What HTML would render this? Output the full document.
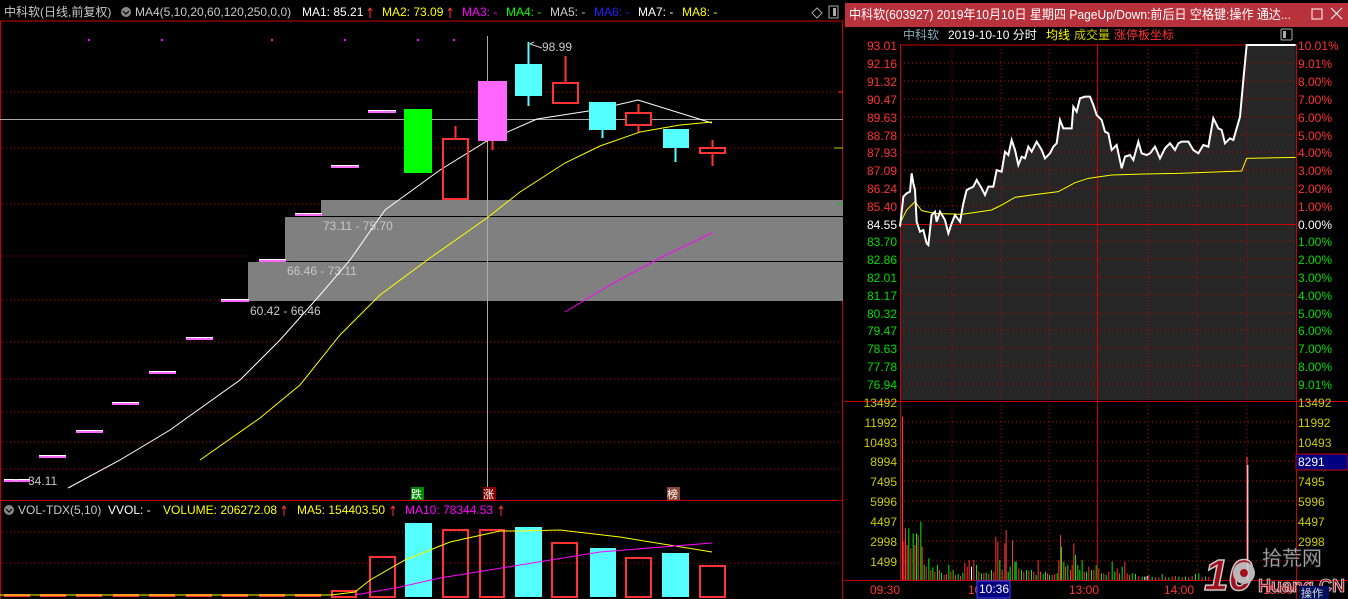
<!DOCTYPE html>
<html><head><meta charset="utf-8"><style>
html,body{margin:0;padding:0;background:#000;width:1348px;height:599px;overflow:hidden}
svg{display:block}
text{font-family:"Liberation Sans","Noto Sans CJK SC",sans-serif}
</style></head><body>
<svg width="1348" height="599" viewBox="0 0 1348 599" xmlns="http://www.w3.org/2000/svg">
<rect width="1348" height="599" fill="#000"/>
<!-- LEFT PANEL -->
<g font-size="12">
<text x="4" y="16" fill="#c8c8c8">中科软(日线,前复权)</text>
<circle cx="126" cy="12" r="5" fill="#888"/>
<path d="M123 11l3 3 3-3" stroke="#000" fill="none" stroke-width="1.2"/>
<text x="135" y="16" fill="#c8c8c8">MA4(5,10,20,60,120,250,0,0)</text>
<text x="302" y="16" fill="#fff">MA1: 85.21</text><path d="M370 18v-10M368 11l2-3 2 3" stroke="#f33" fill="none"/>
<text x="382" y="16" fill="#ff0">MA2: 73.09</text><path d="M450 18v-10M448 11l2-3 2 3" stroke="#f33" fill="none"/>
<text x="462" y="16" fill="#f0f">MA3: -</text>
<text x="506" y="16" fill="#0f0">MA4: -</text>
<text x="550" y="16" fill="#ccc">MA5: -</text>
<text x="594" y="16" fill="#22f">MA6: -</text>
<text x="638" y="16" fill="#fff">MA7: -</text>
<text x="682" y="16" fill="#ff0">MA8: -</text>
</g>
<path d="M817 8l5 5-5 5-5-5z" stroke="#aaa" fill="none"/>
<rect x="829" y="6" width="9" height="12" stroke="#aaa" fill="none"/><rect x="833" y="8" width="3" height="8" fill="#aaa"/>
<path d="M0 21H843M0.5 21V599M842.5 21V599M0 500.5H843" stroke="#c00" stroke-width="1"/>
<g stroke="#c00" stroke-dasharray="1 3">
<path d="M2 92H843M2 148H843M2 204H321M2 256H248M2 300H248M2 342H843M2 379H843M2 412H843M2 442H843M2 469H843"/>
<path d="M2 532H843M2 563H843"/>
</g>
<g fill="#f0f"><rect x="88" y="39" width="2" height="2"/><rect x="161" y="39" width="2" height="2"/><rect x="271" y="39" width="2" height="2"/><rect x="344" y="39" width="2" height="2"/><rect x="417" y="39" width="2" height="2"/><rect x="453" y="39" width="2" height="2"/></g>
<rect x="321" y="200" width="522" height="17" fill="#808080"/>
<rect x="285" y="217" width="558" height="45" fill="#808080"/>
<rect x="248" y="262" width="595" height="39" fill="#808080"/>
<path d="M285 216.5H843M248 261.5H843" stroke="#000"/>
<g font-size="12" fill="#c8c8c8"><text x="323" y="230">73.11 - 75.70</text><text x="287" y="275">66.46 - 73.11</text><text x="250" y="315">60.42 - 66.46</text></g>
<path d="M0 119.5H843M487.5 36V500" stroke="#aaa"/>
<g stroke="#f6f" stroke-width="2">
<path d="M368 112h28M331 167h28M295 215h27M259 261h27M221 301h28M186 339h27M149 373h27M112 404h27M76 432h27M39 457h27M4 481h26"/>
</g>
<g stroke="#fff" stroke-width="1"><path d="M368 110.5h28M331 165.5h28M295 213.5h27M259 259.5h27M221 299.5h28M186 337.5h27M149 371.5h27M112 402.5h27M76 430.5h27M39 455.5h27M4 479.5h26"/></g>
<text x="28" y="485" font-size="12" fill="#c8c8c8">34.11</text>
<path d="M18 480h-4" stroke="#ccc"/>
<polyline points="68,488 120,460 170,430 240,380 280,340 320,295 350,260 385,210 440,170 487,141 537,119 595,110 638,100 712,123" fill="none" stroke="#fff" stroke-width="1"/>
<polyline points="200,460 260,418 300,385 340,335 380,295 430,258 487,218 520,192 565,163 600,146 640,132 680,125 712,122" fill="none" stroke="#ff0" stroke-width="1"/>
<polyline points="565,312 610,285 660,258 712,233" fill="none" stroke="#f0f" stroke-width="1"/>
<rect x="404" y="109" width="28" height="64" fill="#0f0"/>
<path d="M455.5 126v12" stroke="#f33" stroke-width="2"/><rect x="443" y="139" width="25" height="60" fill="none" stroke="#f33" stroke-width="2"/>
<path d="M492.5 141v9" stroke="#f33" stroke-width="2"/><rect x="478" y="81" width="29" height="60" fill="#f6f"/>
<path d="M528.5 42v64" stroke="#5ff" stroke-width="2"/><rect x="515" y="64" width="27" height="32" fill="#5ff"/>
<path d="M534 42l-4 2M530 44l12 4" stroke="#ccc"/><text x="542" y="51" font-size="12" fill="#c8c8c8">98.99</text>
<path d="M565.5 56v26" stroke="#f33" stroke-width="2"/><rect x="553" y="83" width="25" height="20" fill="none" stroke="#f33" stroke-width="2"/>
<path d="M602.5 128v10" stroke="#5ff" stroke-width="2"/><rect x="589" y="102" width="27" height="28" fill="#5ff"/>
<path d="M638.5 104v28" stroke="#f33" stroke-width="2"/><rect x="626" y="113" width="25" height="12" fill="#000" stroke="#f33" stroke-width="2"/>
<path d="M675.5 147v15" stroke="#5ff" stroke-width="2"/><rect x="663" y="129" width="26" height="19" fill="#5ff"/>
<path d="M712.5 140v26" stroke="#f33" stroke-width="2"/><rect x="700" y="148" width="25" height="5" fill="#000" stroke="#f33" stroke-width="2"/>
<path d="M838 92h5" stroke="#f33"/><path d="M834 148h9" stroke="#cc0"/><path d="M838 204h5" stroke="#0c0"/>
<rect x="411" y="487" width="13" height="13" fill="#080"/><text x="411" y="498" font-size="11" fill="#fff">跌</text>
<rect x="483" y="487" width="13" height="13" fill="#800"/><text x="483" y="498" font-size="11" fill="#fff">涨</text>
<rect x="667" y="487" width="13" height="13" fill="#843"/><text x="667" y="498" font-size="11" fill="#fff">榜</text>
<g font-size="12">
<circle cx="9" cy="510" r="5" fill="#888"/><path d="M6 509l3 3 3-3" stroke="#000" fill="none" stroke-width="1.2"/>
<text x="18" y="514" fill="#c8c8c8">VOL-TDX(5,10)</text><text x="108" y="514" fill="#fff">VVOL: -</text>
<text x="163" y="514" fill="#ff0">VOLUME: 206272.08</text><path d="M284 516v-10M282 509l2-3 2 3" stroke="#f33" fill="none"/>
<text x="297" y="514" fill="#ff0">MA5: 154403.50</text><path d="M393 516v-10M391 509l2-3 2 3" stroke="#f33" fill="none"/>
<text x="405" y="514" fill="#f0f">MA10: 78344.53</text><path d="M501 516v-10M499 509l2-3 2 3" stroke="#f33" fill="none"/>
</g>
<g fill="#f33"><rect x="4" y="594" width="26" height="3"/><rect x="40" y="594" width="26" height="3"/><rect x="76" y="594" width="26" height="3"/><rect x="113" y="594" width="26" height="3"/><rect x="149" y="594" width="26" height="3"/><rect x="186" y="594" width="26" height="3"/><rect x="222" y="594" width="26" height="3"/><rect x="259" y="594" width="26" height="3"/><rect x="295" y="594" width="26" height="3"/></g>
<g fill="none" stroke="#f33" stroke-width="2">
<rect x="332" y="591" width="24" height="6"/><rect x="370" y="557" width="25" height="40"/><rect x="443" y="530" width="25" height="67"/><rect x="480" y="530" width="24" height="67"/><rect x="552" y="543" width="25" height="54"/><rect x="626" y="558" width="25" height="39"/><rect x="700" y="566" width="25" height="31"/>
</g>
<g fill="#5ff"><rect x="405" y="523" width="27" height="74"/><rect x="515" y="527" width="27" height="70"/><rect x="590" y="548" width="26" height="49"/><rect x="662" y="553" width="27" height="44"/></g>
<polyline points="0,595 331,595 355,592 370,580 405,560 450,542 500,531 520,531 560,530 620,537 712,552" fill="none" stroke="#ff0"/>
<polyline points="355,595 400,587 440,578 520,565 600,552 712,543" fill="none" stroke="#f0f"/>

<!-- RIGHT PANEL -->
<rect x="845" y="3" width="503" height="24" fill="#b8323b"/>
<text x="849" y="19" font-size="13" fill="#fff" textLength="442" lengthAdjust="spacingAndGlyphs">中科软(603927) 2019年10月10日 星期四 PageUp/Down:前后日 空格键:操作 通达...</text>
<rect x="1312" y="9" width="10" height="10" fill="none" stroke="#fff"/>
<path d="M1331 8l11 11M1342 8l-11 11" stroke="#fff"/>
<g font-size="12">
<text x="903" y="39" fill="#8ab">中科软</text><text x="948" y="39" fill="#fff">2019-10-10 分时</text>
<text x="1046" y="39" fill="#ff0">均线</text><text x="1074" y="39" fill="#cc0">成交量</text><text x="1114" y="39" fill="#f33">涨停板坐标</text>
</g>
<rect x="1281" y="29" width="11" height="11" fill="none" stroke="#aaa" rx="1"/><rect x="1283" y="31" width="3" height="7" fill="#aaa"/>
<g transform="translate(845,40) scale(0.33333)">
<polygon fill="#262626" points="165,1080 165,560 175,470 185,460 195,455 200,400 205,430 210,450 215,545 225,575 235,570 245,610 250,615 255,570 260,525 270,515 275,545 285,515 300,540 310,580 320,550 330,525 345,545 355,490 365,450 385,440 395,420 410,445 420,465 430,440 445,440 455,390 470,395 480,335 490,345 500,300 510,330 520,375 530,350 540,355 550,320 560,335 575,305 590,330 600,355 615,340 625,320 635,310 645,240 655,265 680,265 685,200 695,215 705,175 720,170 735,170 745,195 755,225 770,240 780,275 790,280 800,330 815,315 830,385 840,350 855,345 865,360 880,305 890,340 905,345 915,340 930,320 945,355 960,325 975,310 990,330 1000,310 1010,305 1030,305 1045,330 1060,340 1075,315 1090,320 1105,235 1120,265 1130,270 1140,310 1155,295 1165,300 1175,265 1185,230 1195,120 1205,15 1352,15 1352,1080"/>
</g>
<g stroke="#c00" stroke-dasharray="1 3">
<path d="M900 63H1296M900 81H1296M900 99H1296M900 117H1296M900 135H1296M900 152H1296M900 170H1296M900 188H1296M900 206H1296M900 241H1296M900 259H1296M900 277H1296M900 295H1296M900 313H1296M900 330H1296M900 348H1296M900 366H1296M900 384H1296"/>
<path d="M900 422H1296M900 442H1296M900 461H1296M900 481H1296M900 501H1296M900 521H1296M900 541H1296M900 561H1296"/>
<path d="M952 45V580M1001 45V580M1049 45V580M1148 45V580M1197 45V580M1247 45V580"/>
</g>
<path d="M900.5 44V580M1296.5 44V599M1097.5 44V580M900 224.5H1296M845 401.5H1348M845 580.5H1348M900 45H1296" stroke="#c00"/>
<g transform="translate(845,40) scale(0.33333)">
<polyline fill="none" stroke="#ff0" stroke-width="3" points="165,550 185,510 210,485 230,512 270,520 350,523 440,510 470,495 510,472 560,465 640,455 690,428 730,415 800,405 900,402 1000,400 1190,393 1205,355 1352,352"/>
<polyline fill="none" stroke="#fff" stroke-width="6" points="165,560 175,470 185,460 195,455 200,400 205,430 210,450 215,545 225,575 235,570 245,610 250,615 255,570 260,525 270,515 275,545 285,515 300,540 310,580 320,550 330,525 345,545 355,490 365,450 385,440 395,420 410,445 420,465 430,440 445,440 455,390 470,395 480,335 490,345 500,300 510,330 520,375 530,350 540,355 550,320 560,335 575,305 590,330 600,355 615,340 625,320 635,310 645,240 655,265 680,265 685,200 695,215 705,175 720,170 735,170 745,195 755,225 770,240 780,275 790,280 800,330 815,315 830,385 840,350 855,345 865,360 880,305 890,340 905,345 915,340 930,320 945,355 960,325 975,310 990,330 1000,310 1010,305 1030,305 1045,330 1060,340 1075,315 1090,320 1105,235 1120,265 1130,270 1140,310 1155,295 1165,300 1175,265 1185,230 1195,120 1205,15 1352,15"/>
</g>
<g font-size="12" fill="#f33" text-anchor="end">
<text x="897" y="50">93.01</text><text x="897" y="68">92.16</text><text x="897" y="86">91.32</text><text x="897" y="104">90.47</text><text x="897" y="122">89.63</text><text x="897" y="140">88.78</text><text x="897" y="157">87.93</text><text x="897" y="175">87.09</text><text x="897" y="193">86.24</text><text x="897" y="211">85.40</text>
<text x="897" y="229" fill="#fff">84.55</text>
</g>
<g font-size="12" fill="#0d0" text-anchor="end">
<text x="897" y="246">83.70</text><text x="897" y="264">82.86</text><text x="897" y="282">82.01</text><text x="897" y="300">81.17</text><text x="897" y="318">80.32</text><text x="897" y="335">79.47</text><text x="897" y="353">78.63</text><text x="897" y="371">77.78</text><text x="897" y="389">76.94</text>
</g>
<g font-size="12" fill="#f33">
<text x="1298" y="50">10.01%</text><text x="1298" y="68">9.01%</text><text x="1298" y="86">8.00%</text><text x="1298" y="104">7.00%</text><text x="1298" y="122">6.00%</text><text x="1298" y="140">5.00%</text><text x="1298" y="157">4.00%</text><text x="1298" y="175">3.00%</text><text x="1298" y="193">2.00%</text><text x="1298" y="211">1.00%</text>
<text x="1298" y="229" fill="#fff">0.00%</text>
</g>
<g font-size="12" fill="#0d0">
<text x="1298" y="246">1.00%</text><text x="1298" y="264">2.00%</text><text x="1298" y="282">3.00%</text><text x="1298" y="300">4.00%</text><text x="1298" y="318">5.00%</text><text x="1298" y="335">6.00%</text><text x="1298" y="353">7.00%</text><text x="1298" y="371">8.00%</text><text x="1298" y="389">9.01%</text>
</g>
<g font-size="12" fill="#cc0">
<g text-anchor="end"><text x="897" y="407">13492</text><text x="897" y="427">11992</text><text x="897" y="447">10493</text><text x="897" y="466">8994</text><text x="897" y="486">7495</text><text x="897" y="506">5996</text><text x="897" y="526">4497</text><text x="897" y="546">2998</text><text x="897" y="566">1499</text></g>
<text x="1298" y="407">13492</text><text x="1298" y="427">11992</text><text x="1298" y="447">10493</text><text x="1298" y="506">5996</text><text x="1298" y="486">7495</text><text x="1298" y="526">4497</text><text x="1298" y="546">2998</text>
</g>
<rect x="1296" y="454" width="52" height="16" fill="#000080" stroke="#c00"/>
<text x="1298" y="466" font-size="12" fill="#fff">8291</text>
<g transform="translate(845,400) scale(0.33333)">
<g fill="#f33">
<rect x="171" y="50" width="3" height="490"/><rect x="175" y="425" width="3" height="115"/><rect x="180" y="385" width="3" height="155"/><rect x="185" y="435" width="3" height="105"/><rect x="196" y="445" width="3" height="95"/><rect x="208" y="435" width="3" height="105"/><rect x="218" y="405" width="3" height="135"/><rect x="230" y="440" width="3" height="100"/><rect x="242" y="500" width="3" height="40"/><rect x="256" y="510" width="3" height="30"/><rect x="268" y="515" width="3" height="25"/><rect x="282" y="510" width="3" height="30"/><rect x="296" y="525" width="3" height="15"/><rect x="303" y="522" width="3" height="18"/><rect x="316" y="515" width="3" height="25"/><rect x="330" y="525" width="3" height="15"/><rect x="345" y="528" width="3" height="12"/><rect x="358" y="488" width="3" height="52"/><rect x="365" y="500" width="3" height="40"/><rect x="371" y="480" width="3" height="60"/><rect x="385" y="480" width="3" height="60"/><rect x="400" y="515" width="3" height="25"/><rect x="415" y="520" width="3" height="20"/><rect x="430" y="522" width="3" height="18"/><rect x="445" y="515" width="3" height="25"/><rect x="451" y="410" width="3" height="130"/><rect x="457" y="425" width="3" height="115"/><rect x="470" y="510" width="3" height="30"/><rect x="478" y="430" width="3" height="110"/><rect x="482" y="390" width="3" height="150"/><rect x="501" y="420" width="3" height="120"/><rect x="520" y="505" width="3" height="35"/><rect x="535" y="515" width="3" height="25"/><rect x="550" y="512" width="3" height="28"/><rect x="565" y="515" width="3" height="25"/><rect x="578" y="480" width="3" height="60"/><rect x="585" y="515" width="3" height="25"/><rect x="606" y="520" width="3" height="20"/><rect x="620" y="525" width="3" height="15"/><rect x="628" y="522" width="3" height="18"/><rect x="640" y="480" width="3" height="60"/><rect x="645" y="405" width="3" height="135"/><rect x="660" y="500" width="3" height="40"/><rect x="675" y="510" width="3" height="30"/><rect x="680" y="495" width="3" height="45"/><rect x="685" y="430" width="3" height="110"/><rect x="716" y="515" width="3" height="25"/><rect x="730" y="500" width="3" height="40"/><rect x="745" y="510" width="3" height="30"/><rect x="760" y="505" width="3" height="35"/><rect x="775" y="520" width="3" height="20"/><rect x="790" y="515" width="3" height="25"/><rect x="815" y="505" width="3" height="35"/><rect x="822" y="520" width="3" height="20"/><rect x="838" y="485" width="3" height="55"/><rect x="845" y="520" width="3" height="20"/><rect x="852" y="525" width="3" height="15"/><rect x="880" y="528" width="3" height="12"/><rect x="910" y="525" width="3" height="15"/><rect x="930" y="532" width="3" height="8"/><rect x="940" y="532" width="3" height="8"/><rect x="960" y="530" width="3" height="10"/><rect x="980" y="530" width="3" height="10"/><rect x="990" y="528" width="3" height="12"/><rect x="1010" y="532" width="3" height="8"/><rect x="1030" y="532" width="3" height="8"/><rect x="1040" y="528" width="3" height="12"/><rect x="1070" y="532" width="3" height="8"/><rect x="1090" y="530" width="3" height="10"/><rect x="1204" y="170" width="4" height="370"/>
</g>
<g fill="#0e0">
<rect x="190" y="385" width="3" height="155"/><rect x="203" y="400" width="3" height="140"/><rect x="213" y="400" width="3" height="140"/><rect x="226" y="365" width="3" height="175"/><rect x="236" y="495" width="3" height="45"/><rect x="250" y="475" width="3" height="65"/><rect x="262" y="502" width="3" height="38"/><rect x="276" y="495" width="3" height="45"/><rect x="288" y="518" width="3" height="22"/><rect x="310" y="495" width="3" height="45"/><rect x="323" y="510" width="3" height="30"/><rect x="338" y="522" width="3" height="18"/><rect x="352" y="518" width="3" height="22"/><rect x="393" y="495" width="3" height="45"/><rect x="408" y="520" width="3" height="20"/><rect x="422" y="518" width="3" height="22"/><rect x="438" y="510" width="3" height="30"/><rect x="463" y="480" width="3" height="60"/><rect x="488" y="515" width="3" height="25"/><rect x="494" y="500" width="3" height="40"/><rect x="508" y="485" width="3" height="55"/><rect x="512" y="485" width="3" height="55"/><rect x="528" y="510" width="3" height="30"/><rect x="543" y="510" width="3" height="30"/><rect x="558" y="510" width="3" height="30"/><rect x="572" y="525" width="3" height="15"/><rect x="593" y="522" width="3" height="18"/><rect x="600" y="515" width="3" height="25"/><rect x="612" y="525" width="3" height="15"/><rect x="635" y="520" width="3" height="20"/><rect x="648" y="440" width="3" height="100"/><rect x="655" y="485" width="3" height="55"/><rect x="667" y="495" width="3" height="45"/><rect x="690" y="465" width="3" height="75"/><rect x="697" y="495" width="3" height="45"/><rect x="703" y="510" width="3" height="30"/><rect x="710" y="480" width="3" height="60"/><rect x="723" y="515" width="3" height="25"/><rect x="738" y="510" width="3" height="30"/><rect x="752" y="495" width="3" height="45"/><rect x="768" y="520" width="3" height="20"/><rect x="782" y="525" width="3" height="15"/><rect x="800" y="485" width="3" height="55"/><rect x="808" y="515" width="3" height="25"/><rect x="830" y="500" width="3" height="40"/><rect x="860" y="520" width="3" height="20"/><rect x="870" y="522" width="3" height="18"/><rect x="890" y="530" width="3" height="10"/><rect x="920" y="530" width="3" height="10"/><rect x="950" y="522" width="3" height="18"/><rect x="970" y="532" width="3" height="8"/><rect x="1000" y="530" width="3" height="10"/><rect x="1020" y="530" width="3" height="10"/><rect x="1050" y="522" width="3" height="18"/><rect x="1060" y="520" width="3" height="20"/><rect x="1080" y="530" width="3" height="10"/>
</g>
<g fill="#fff"><rect x="378" y="500" width="3" height="40"/><rect x="898" y="530" width="3" height="10"/><rect x="905" y="528" width="3" height="12"/><rect x="1207" y="195" width="3" height="345"/></g>
</g>
<g font-size="12" fill="#f33"><text x="870" y="594">09:30</text><text x="968" y="594">10</text><text x="1069" y="594">13:00</text><text x="1164" y="594">14:00</text><text x="1263" y="594">15:00</text></g>
<rect x="977" y="581" width="33" height="17" fill="#000080" stroke="#44f"/>
<text x="979" y="593" font-size="12" fill="#fff">10:36</text>
<g opacity="0.9">
<text x="1204" y="590" font-size="44" font-weight="bold" font-style="italic" fill="#b01020" stroke="#ddd" stroke-width="1.5">10</text>
<circle cx="1244" cy="573" r="11" fill="#ccc"/><circle cx="1244" cy="573" r="4" fill="#b01020"/>
<text x="1262" y="565" font-size="20" fill="#bbb" stroke="#555" stroke-width="0.5">拾荒网</text>
<text x="1258" y="592" font-size="18" font-weight="bold" fill="#b01020" stroke="#eee" stroke-width="0.8">Huang.CN</text>
</g>
<rect x="1299" y="586" width="30" height="13" fill="#001060"/><text x="1301" y="597" font-size="11" fill="#ddd">操作</text>
</svg>
</body></html>
